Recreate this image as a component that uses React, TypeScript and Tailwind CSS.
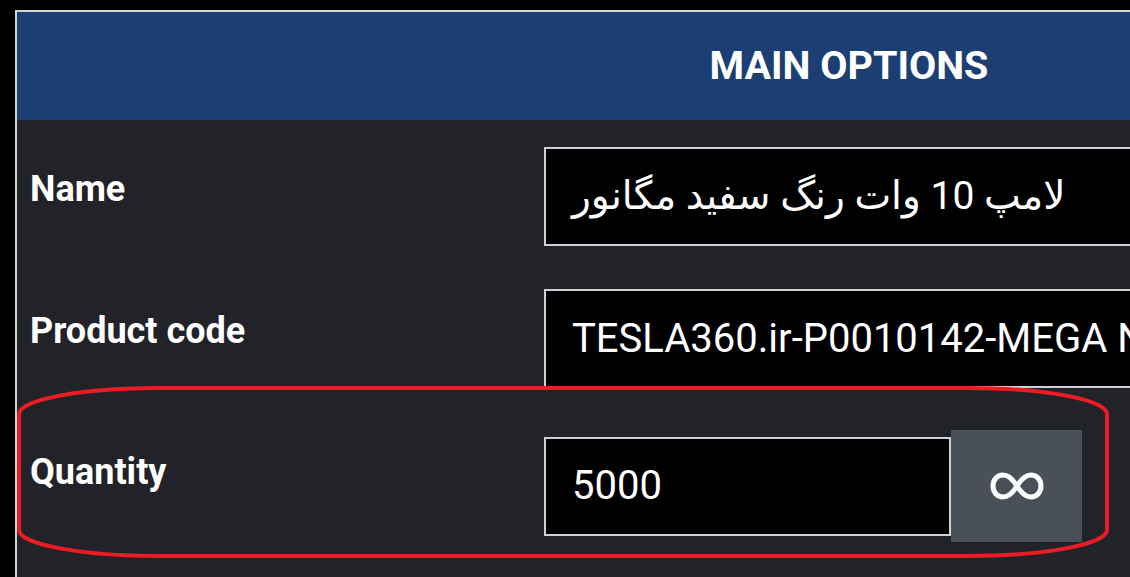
import React from 'react';

function Label({ children }: { children: React.ReactNode }) {
  return (
    <div className="w-[527px] shrink-0 pl-[13px] pt-[23px] text-[36px] font-bold leading-[38px] text-white">
      {children}
    </div>
  );
}

function Field({ value }: { value: string }) {
  return (
    <div className="flex h-[99px] w-[1000px] items-center border-2 border-[#cdd0d4] bg-black pl-[26px] text-[40px] text-white whitespace-nowrap overflow-hidden">
      {value}
    </div>
  );
}

export default function App() {
  return (
    <div className="relative h-[577px] w-[1130px] overflow-hidden bg-black font-['Roboto','DejaVu_Sans',sans-serif]">
      <div className="absolute left-[15px] top-[10px] w-[1666px] h-[600px] border-l-2 border-t-2 border-[#d4d4d4] bg-[#212328]">
        {/* Header */}
        <div className="flex h-[108px] items-center justify-center bg-[#1b3f73]">
          <h2 className="text-[39.5px] font-bold text-white">MAIN OPTIONS</h2>
        </div>

        {/* Rows */}
        <div className="flex flex-col pt-[27px]">
          <div className="flex h-[142px] items-start">
            <Label>Name</Label>
            <div className="flex h-[99px] w-[1000px] items-center border-2 border-[#cdd0d4] bg-black pl-[26px] text-[39px] text-white whitespace-nowrap overflow-hidden">
              لامپ 10 وات رنگ سفید مگانور
            </div>
          </div>
          <div className="flex h-[141px] items-start">
            <Label>Product code</Label>
            <Field value="TESLA360.ir-P0010142-MEGA NOOR" />
          </div>
          <div className="flex items-start">
            <Label>Quantity</Label>
            <div className="flex items-center">
              <div className="flex h-[99px] w-[407px] items-center border-2 border-[#cdd0d4] bg-black pl-[26px] text-[40px] text-white">
                5000
              </div>
              <button className="flex h-[112px] w-[131px] items-center justify-center bg-[#4a5058]">
                <svg width="54" height="30" viewBox="0 0 54 30" fill="none">
                  <path
                    d="M27 15 C22 7 18 4 13 4 C7 4 3 9 3 15 C3 21 7 26 13 26 C18 26 22 23 27 15 C32 7 36 4 41 4 C47 4 51 9 51 15 C51 21 47 26 41 26 C36 26 32 23 27 15 Z"
                    stroke="white"
                    strokeWidth="5"
                    strokeLinejoin="round"
                  />
                </svg>
              </button>
            </div>
          </div>
        </div>
      </div>

      {/* Red highlight annotation */}
      <svg className="absolute left-[17px] top-[386px]" width="1092" height="172" viewBox="0 0 1092 172" fill="none">
        <rect x="2" y="2" width="1088" height="168" rx="140" ry="26" stroke="#ed1c24" strokeWidth="4" />
      </svg>
    </div>
  );
}
